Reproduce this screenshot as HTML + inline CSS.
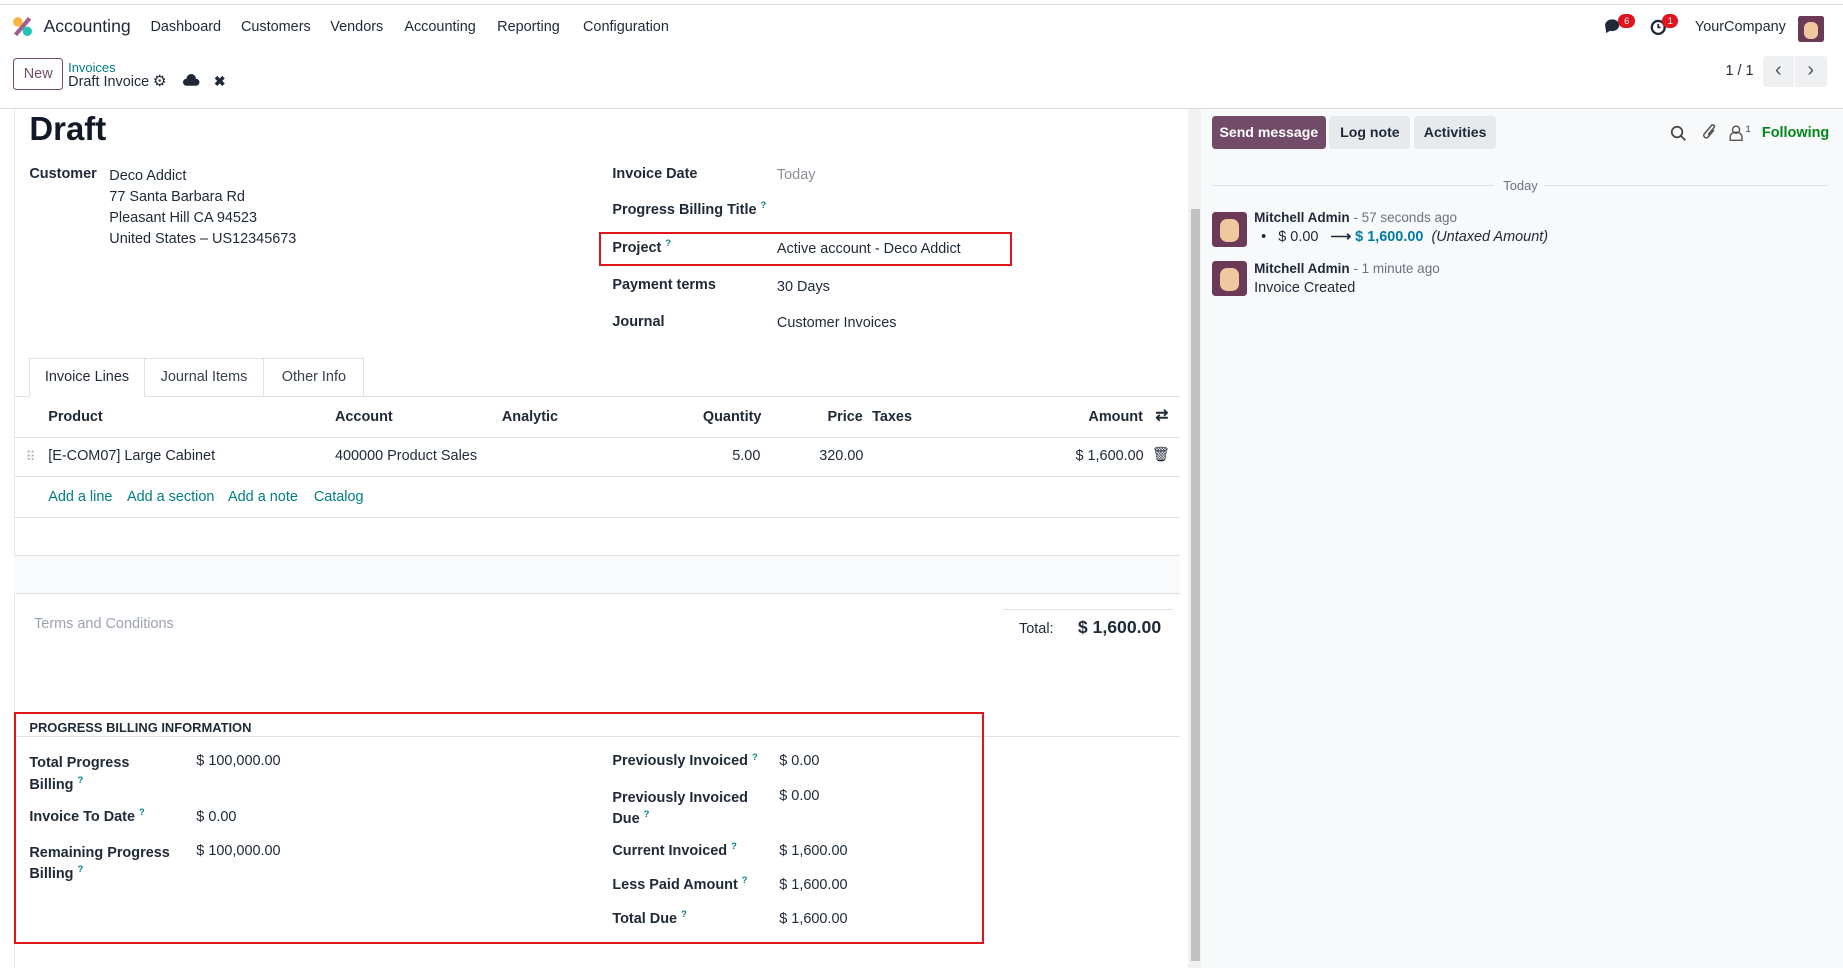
<!DOCTYPE html>
<html><head><meta charset="utf-8"><style>
*{box-sizing:border-box;margin:0;padding:0}
html,body{width:1843px;height:969px;overflow:hidden;background:#fff}
#r{zoom:1.17538;width:1568px;height:824px;position:relative;font-family:"Liberation Sans",sans-serif;font-size:12.3px;line-height:15px;color:#374151}
.a{position:absolute;white-space:nowrap}
.b{font-weight:bold;color:#1f2937}
.t{color:#017e84}
.q{color:#017e84;font-size:8px;position:relative;top:-5px;line-height:0}
.red{position:absolute;border:2px solid #e0141e}
</style></head><body><div id="r">
<div class="a" style="left:0;top:3px;width:1568px;height:1px;background:#ddd"></div>
<svg class="a" style="left:10px;top:14px" width="18" height="18" viewBox="0 0 18 18"><circle cx="5" cy="5" r="4" fill="#f9b43b"/><circle cx="13" cy="13" r="4" fill="#21c4b4"/><path d="M3 16 L15 2" stroke="#a05c8e" stroke-width="3.5"/></svg>
<div class="a" style="left:37px;top:15px;font-size:15px;color:#1f2937">Accounting</div>
<div class="a" style="left:128px;top:16px;color:#1f2937">Dashboard</div>
<div class="a" style="left:205px;top:16px;color:#1f2937">Customers</div>
<div class="a" style="left:281px;top:16px;color:#1f2937">Vendors</div>
<div class="a" style="left:344px;top:16px;color:#1f2937">Accounting</div>
<div class="a" style="left:423px;top:16px;color:#1f2937">Reporting</div>
<div class="a" style="left:496px;top:16px;color:#1f2937">Configuration</div>
<svg class="a" style="left:1365px;top:16px" width="16" height="14"><path d="M1 6a6 5 0 1 1 4 4l-3 2z" fill="#1f2937"/></svg>
<div class="a" style="left:1377px;top:12px;width:14px;height:12px;border-radius:6px;background:#e0141e;color:#fff;font-size:8px;text-align:center;line-height:12px">6</div>
<svg class="a" style="left:1404px;top:15px" width="15" height="15"><circle cx="7" cy="8" r="5.5" fill="none" stroke="#1f2937" stroke-width="2"/><path d="M7 5v3h2" stroke="#1f2937" stroke-width="1.5" fill="none"/></svg>
<div class="a" style="left:1414px;top:12px;width:14px;height:12px;border-radius:6px;background:#e0141e;color:#fff;font-size:8px;text-align:center;line-height:12px">1</div>
<div class="a" style="left:1442px;top:16px;color:#1f2937">YourCompany</div>
<div class="a" style="left:1530px;top:14px;width:22px;height:22px;background:#6b3a56;border-radius:2px"><div style="margin:5px auto;width:12px;height:14px;background:#f0c8a0;border-radius:5px"></div></div>
<div class="a" style="left:11px;top:49px;width:43px;height:28px;border:1px solid #714b67;border-radius:3px;text-align:center;line-height:26px;color:#714b67">New</div>
<div class="a t" style="left:58px;top:50px;font-size:11px">Invoices</div>
<div class="a" style="left:58px;top:63px;color:#1f2937">Draft Invoice</div>
<div class="a" style="left:130px;top:62px;font-size:13px;color:#1f2937">⚙</div>
<svg class="a" style="left:156px;top:63px" width="14" height="10"><path d="M3 10a3 3 0 0 1 0-6a4 4 0 0 1 8 0a3 3 0 0 1 0 6z" fill="#1f2937"/></svg>
<div class="a b" style="left:182px;top:62px;font-size:12px">✖</div>
<div class="a" style="left:1468px;top:54px;color:#1f2937">1 / 1</div>
<div class="a" style="left:1500px;top:48px;width:26px;height:26px;background:#eef0f2;border-radius:3px 0 0 3px;color:#555;font-size:17px;line-height:24px;text-align:center">‹</div>
<div class="a" style="left:1527px;top:48px;width:27px;height:26px;background:#eef0f2;border-radius:0 3px 3px 0;color:#555;font-size:17px;line-height:24px;text-align:center">›</div>
<div class="a" style="left:0;top:92px;width:1568px;height:1px;background:#ddd"></div>
<div class="a" style="left:1011px;top:93px;width:11px;height:731px;background:#f1f1f1"></div>
<div class="a" style="left:1013px;top:178px;width:8px;height:640px;background:#c1c1c1"></div>
<div class="a" style="left:12px;top:93px;width:1px;height:731px;background:#e5e7eb"></div>
<div class="a b" style="left:25px;top:94px;font-size:28px;line-height:32px;color:#111827">Draft</div>
<div class="a b" style="left:25px;top:141px">Customer</div>
<div class="a" style="left:93px;top:141px;line-height:18px;color:#1f2937">Deco Addict<br>77 Santa Barbara Rd<br>Pleasant Hill CA 94523<br>United States – US12345673</div>
<div class="a b" style="left:521px;top:141px">Invoice Date</div><div class="a" style="left:661px;top:142px;color:#8a8f96">Today</div>
<div class="a b" style="left:521px;top:172px">Progress Billing Title <span class="q">?</span></div>
<div class="a b" style="left:521px;top:204px">Project <span class="q">?</span></div><div class="a" style="left:661px;top:205px;color:#1f2937">Active account - Deco Addict</div>
<div class="red" style="left:510px;top:197px;width:351px;height:29px"></div>
<div class="a b" style="left:521px;top:236px">Payment terms</div><div class="a" style="left:661px;top:237px;color:#1f2937">30 Days</div>
<div class="a b" style="left:521px;top:267px">Journal</div><div class="a" style="left:661px;top:268px;color:#1f2937">Customer Invoices</div>
<div class="a" style="left:12px;top:337px;width:992px;height:1px;background:#dee2e6"></div>
<div class="a" style="left:25px;top:305px;width:98px;height:33px;border:1px solid #dee2e6;border-bottom:1px solid #fff;background:#fff;text-align:center;line-height:31px;color:#1f2937">Invoice Lines</div>
<div class="a" style="left:123px;top:305px;width:102px;height:33px;border:1px solid #dee2e6;border-left:0;border-bottom:0;text-align:center;line-height:31px">Journal Items</div>
<div class="a" style="left:225px;top:305px;width:85px;height:33px;border:1px solid #dee2e6;border-left:0;border-bottom:0;text-align:center;line-height:31px">Other Info</div>
<div class="a b" style="left:41px;top:348px">Product</div>
<div class="a b" style="left:285px;top:348px">Account</div>
<div class="a b" style="left:427px;top:348px">Analytic</div>
<div class="a b" style="left:598px;top:348px">Quantity</div>
<div class="a b" style="left:704px;top:348px">Price</div>
<div class="a b" style="left:742px;top:348px">Taxes</div>
<div class="a b" style="left:926px;top:348px">Amount</div>
<div class="a b" style="left:983px;top:346px;font-size:13px">⇄</div>
<div class="a" style="left:12px;top:372px;width:992px;height:1px;background:#dee2e6"></div>
<div class="a" style="left:22px;top:381px;color:#aaa;font-size:11px">⠿</div>
<div class="a" style="left:41px;top:381px;color:#1f2937">[E-COM07] Large Cabinet</div>
<div class="a" style="left:285px;top:381px;color:#1f2937">400000 Product Sales</div>
<div class="a" style="left:623px;top:381px;color:#1f2937">5.00</div>
<div class="a" style="left:697px;top:381px;color:#1f2937">320.00</div>
<div class="a" style="left:915px;top:381px;color:#1f2937">$ 1,600.00</div>
<div class="a" style="left:980px;top:380px;color:#1f2937">🗑</div>
<div class="a" style="left:12px;top:405px;width:992px;height:1px;background:#dee2e6"></div>
<div class="a t" style="left:41px;top:416px">Add a line</div>
<div class="a t" style="left:108px;top:416px">Add a section</div>
<div class="a t" style="left:194px;top:416px">Add a note</div>
<div class="a t" style="left:267px;top:416px">Catalog</div>
<div class="a" style="left:12px;top:440px;width:992px;height:1px;background:#dee2e6"></div>
<div class="a" style="left:12px;top:472px;width:992px;height:33px;background:#f9fafb;border-top:1px solid #dee2e6;border-bottom:1px solid #dee2e6"></div>
<div class="a" style="left:29px;top:524px;color:#9ca3af">Terms and Conditions</div>
<div class="a" style="left:853px;top:518px;width:145px;height:1px;background:#dee2e6"></div>
<div class="a" style="left:867px;top:528px;color:#1f2937">Total:</div>
<div class="a b" style="left:917px;top:527px;font-size:15px">$ 1,600.00</div>
<div class="a" style="left:12px;top:626px;width:992px;height:1px;background:#dee2e6"></div>
<div class="a b" style="left:25px;top:612px;font-size:11px">PROGRESS BILLING INFORMATION</div>
<div class="red" style="left:12px;top:606px;width:825px;height:197px"></div>
<div class="a b" style="left:25px;top:641px;line-height:18px">Total Progress<br>Billing <span class="q">?</span></div><div class="a" style="left:167px;top:641px;color:#1f2937">$ 100,000.00</div>
<div class="a b" style="left:25px;top:688px">Invoice To Date <span class="q">?</span></div><div class="a" style="left:167px;top:688px;color:#1f2937">$ 0.00</div>
<div class="a b" style="left:25px;top:717px;line-height:18px">Remaining Progress<br>Billing <span class="q">?</span></div><div class="a" style="left:167px;top:717px;color:#1f2937">$ 100,000.00</div>
<div class="a b" style="left:521px;top:641px">Previously Invoiced <span class="q">?</span></div><div class="a" style="left:663px;top:641px;color:#1f2937">$ 0.00</div>
<div class="a b" style="left:521px;top:670px;line-height:18px">Previously Invoiced<br>Due <span class="q">?</span></div><div class="a" style="left:663px;top:670px;color:#1f2937">$ 0.00</div>
<div class="a b" style="left:521px;top:717px">Current Invoiced <span class="q">?</span></div><div class="a" style="left:663px;top:717px;color:#1f2937">$ 1,600.00</div>
<div class="a b" style="left:521px;top:746px">Less Paid Amount <span class="q">?</span></div><div class="a" style="left:663px;top:746px;color:#1f2937">$ 1,600.00</div>
<div class="a b" style="left:521px;top:775px">Total Due <span class="q">?</span></div><div class="a" style="left:663px;top:775px;color:#1f2937">$ 1,600.00</div>
<div class="a" style="left:1022px;top:93px;width:546px;height:731px;background:#f8f9fa"></div>
<div class="a" style="left:1031px;top:99px;width:97px;height:28px;background:#714b67;border-radius:3px;color:#fff;text-align:center;line-height:28px;font-weight:bold;font-size:12px">Send message</div>
<div class="a" style="left:1131px;top:99px;width:69px;height:28px;background:#e7e9ed;border-radius:3px;color:#1f2937;text-align:center;line-height:28px;font-weight:bold;font-size:12px">Log note</div>
<div class="a" style="left:1203px;top:99px;width:70px;height:28px;background:#e7e9ed;border-radius:3px;color:#1f2937;text-align:center;line-height:28px;font-weight:bold;font-size:12px">Activities</div>
<svg class="a" style="left:1421px;top:106px" width="14" height="14"><circle cx="6" cy="6" r="4.5" fill="none" stroke="#444" stroke-width="1.5"/><path d="M9.5 9.5l3.5 3.5" stroke="#444" stroke-width="1.5"/></svg>
<svg class="a" style="left:1447px;top:105px" width="14" height="16"><path d="M11 6l-5 6a2 2 0 0 1-3-3l6-7a1.3 1.3 0 0 1 2 2l-5 6" fill="none" stroke="#555" stroke-width="1.3"/></svg>
<svg class="a" style="left:1471px;top:106px" width="12" height="14"><circle cx="6" cy="4" r="3" fill="none" stroke="#555" stroke-width="1.2"/><path d="M1 13v-3a5 4 0 0 1 10 0v3z" fill="none" stroke="#555" stroke-width="1.2"/></svg>
<div class="a" style="left:1485px;top:102px;font-size:8px">1</div>
<div class="a" style="left:1499px;top:106px;color:#008818;font-weight:bold">Following</div>
<div class="a" style="left:1031px;top:157px;width:240px;height:1px;background:#dee2e6"></div>
<div class="a" style="left:1279px;top:151px;color:#6b7280;font-size:11px">Today</div>
<div class="a" style="left:1314px;top:157px;width:241px;height:1px;background:#dee2e6"></div>
<div class="a" style="left:1031px;top:180px;width:30px;height:30px;background:#6b3a56;border-radius:3px"><div style="margin:6px auto;width:16px;height:20px;background:#f0c8a0;border-radius:6px"></div></div>
<div class="a" style="left:1067px;top:178px;font-size:11.5px"><b style="color:#1f2937">Mitchell Admin</b> <span style="color:#6b7280">- 57 seconds ago</span></div>
<div class="a" style="left:1073px;top:195px;color:#1f2937">•&nbsp;&nbsp;&nbsp;$ 0.00&nbsp;&nbsp;&nbsp;<b>⟶</b> <span style="color:#017e9f;font-weight:bold">$ 1,600.00</span>&nbsp;&nbsp;<i>(Untaxed Amount)</i></div>
<div class="a" style="left:1031px;top:222px;width:30px;height:30px;background:#6b3a56;border-radius:3px"><div style="margin:6px auto;width:16px;height:20px;background:#f0c8a0;border-radius:6px"></div></div>
<div class="a" style="left:1067px;top:221px;font-size:11.5px"><b style="color:#1f2937">Mitchell Admin</b> <span style="color:#6b7280">- 1 minute ago</span></div>
<div class="a" style="left:1067px;top:238px;color:#1f2937">Invoice Created</div>
</div></body></html>
